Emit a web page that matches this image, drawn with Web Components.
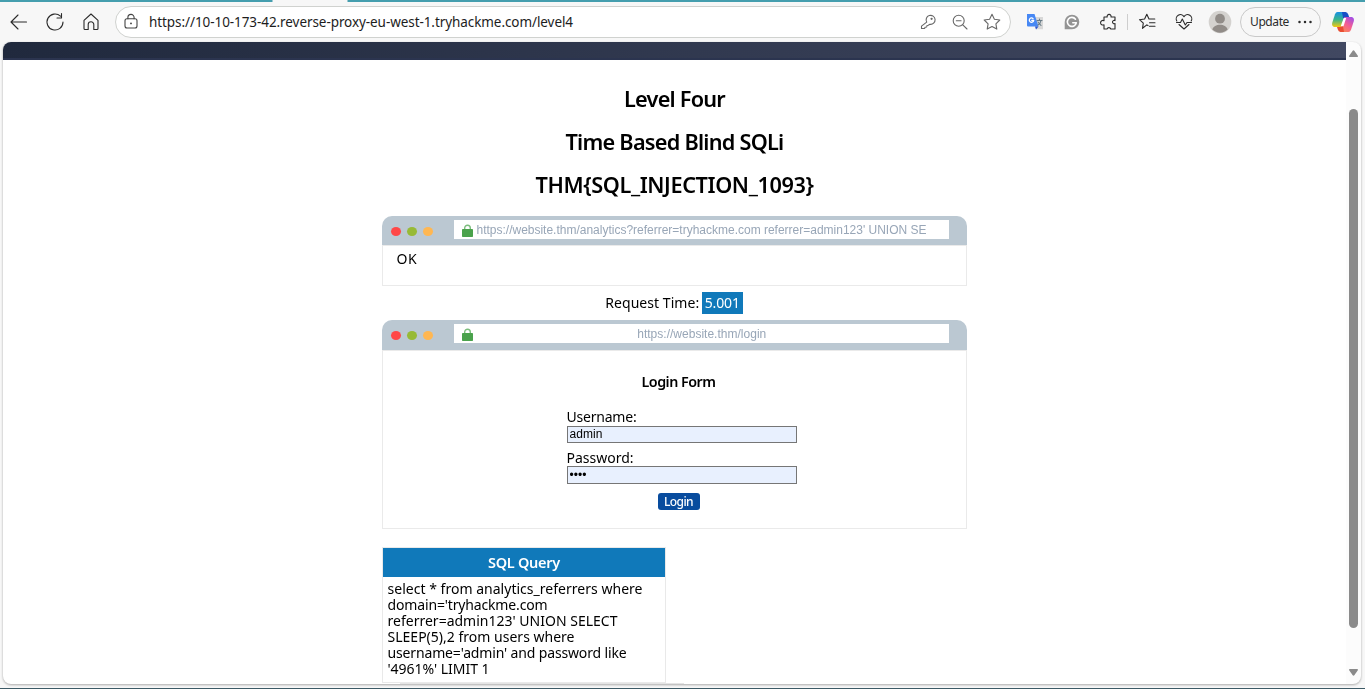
<!DOCTYPE html>
<html lang="en">
<head>
<meta charset="utf-8">
<title>Level Four</title>
<style>
html,body{margin:0;height:100%;overflow:hidden}
body{font-family:"Noto Sans","Open Sans",sans-serif;color:#000}
</style>
</head>
<body>
<browser-window></browser-window>
<script>
const define = (name, html, setup) => {
  const t = document.createElement('template');
  t.innerHTML = html;
  customElements.define(name, class extends HTMLElement {
    connectedCallback() {
      if (this.shadowRoot) return;
      this.attachShadow({mode: 'open'}).append(t.content.cloneNode(true));
      if (setup) setup(this, this.shadowRoot);
    }
  });
};

/* One line of text whose tracking is adjusted to occupy the requested width. */
define('fit-text', `<style>:host{display:inline-block;white-space:pre}span{display:inline-block}</style><span><slot></slot></span>`, (el, root) => {
  const s = root.querySelector('span'), w = +el.getAttribute('w');
  const natural = s.getBoundingClientRect().width;
  s.style.letterSpacing = ((w - natural) / el.textContent.length) + 'px';
  el.style.width = w + 'px';
});

const icons = {
  back: '<path d="M19.500 12H4M11 5l-7 7 7 7"/>',
  reload: '<path d="M17.500 6.200A8 8 0 1 0 20 12M18.500 3.500v4.500H14"/>',
  home: '<path d="M5 10.300 12 4l7 6.300v8.200a1 1 0 0 1-1 1h-3.200v-5a2.800 2.800 0 0 0-5.600 0v5H6a1 1 0 0 1-1-1z"/>',
  lock: '<rect x="6" y="8.800" width="12" height="9.200" rx="2"/><path d="M8.900 8.800V7.500a3.100 3.100 0 0 1 6.200 0v1.300"/><circle cx="12" cy="13.400" r=".4" fill="currentColor"/>',
  key: '<path d="M11.200 12.800a4.500 4.500 0 1 1 3.200 2.200L12.800 16l-1.300.2-.3 1.500-1.700.2-.3 1.300H6v-2.400z" transform="translate(-.5 -.7)"/><circle cx="15.600" cy="8.800" r=".6"/>',
  zoom: '<circle cx="10.700" cy="10.700" r="5.500"/><path d="M14.800 14.800l4.200 4.200M8.300 10.700h4.800"/>',
  star: '<path d="M12 4.300l2.400 4.900 5.400.8-3.900 3.800.9 5.300-4.800-2.500-4.800 2.500.9-5.300-3.900-3.800 5.400-.8z"/>',
  puzzle: '<path d="M8 7h3.200a2 2 0 1 1 3.800 0H19v3.600a1.700 1.700 0 1 0 0 3V19h-4.200a2 2 0 0 0-3.800 0H8v-4.300a2.300 2.300 0 1 1 0-4z"/>',
  favorites: '<path d="M12 15.600l-1.200-.7-4.300 3.400.8-5.100-3.800-3.500 5.100-.7 2.200-4.700L13 9h5.800M13.500 12.700H19M13.500 16.300H19"/>',
  health: '<path d="M4.800 11a4 4 0 0 1 7.200-4.300A4 4 0 0 1 19.200 11M7 14.500l5 4.500 5-4.500M4.500 12.500h4l1.800-3.500 3 6 1.700-2.500h4.500"/>',
  profile: '<g stroke="none"><circle cx="12" cy="12" r="11.300" fill="#d4d2cf"/><circle cx="12" cy="8.700" r="4.900" fill="#918c88"/><path d="M4.300 19.500c1.500-6.500 13.900-6.500 15.400 0a11 11 0 0 1-15.400 0z" fill="#918c88"/></g>',
  translate: '<g stroke="none"><path d="M11 7h9v12.300h-7z" fill="#d8d8d8"/><path d="M4 4h7.500l4 12.500H5a1 1 0 0 1-1-1z" fill="#4788f4"/><path d="M12 16.500h3.500L13 19.500z" fill="#2953cf"/></g><path d="M10 8.500a2.200 2.200 0 1 0 .7 2H8.800" stroke="#fff" stroke-width="1.300"/><path d="M14 10.500h5M16.500 9v1.500M18 10.500c-.5 2.500-2 4-3 4.500M15 12l3 3.500" stroke="#687c87"/>',
  grammar: '<path d="M12 4.700a7.300 7.300 0 0 1 0 14.600H4.700V12A7.300 7.300 0 0 1 12 4.700z" fill="#949494" stroke="none"/><path d="M15.500 9.200a4.500 4.500 0 1 0 .8 3.600h-3.500" stroke="#fff" stroke-width="1.600"/>',
  dots: '<g fill="currentColor" stroke="none"><circle cx="6.500" cy="12" r="1.250"/><circle cx="12" cy="12" r="1.250"/><circle cx="17.500" cy="12" r="1.250"/></g>',
  copilot: `<defs><linearGradient id="a" x2="0" y2="1"><stop stop-color="#168fe5"/><stop offset=".5" stop-color="#39b58c"/><stop offset="1" stop-color="#f5c90f"/></linearGradient><linearGradient id="b" x1=".8" x2=".2" y2="1"><stop stop-color="#a34ee5"/><stop offset=".5" stop-color="#f45d93"/><stop offset="1" stop-color="#fa8755"/></linearGradient></defs><g stroke="none"><path d="M6.500 2h8L10.500 17H4C1 17 .7 14.500 1.300 12.500L4 4.300Q4.800 2 6.500 2z" fill="url(#a)"/><path d="M11 2h3.500q2 0 2.800 2.500l.9 2.800h-3.200q-2 0-2.700 2.200z" fill="#174fc5"/><path d="M17.500 22h-8l4-15H20c3 0 3.300 2.500 2.700 4.500L20 19.700Q19.200 22 17.500 22z" fill="url(#b)"/><path d="M13 22H9.500q-2 0-2.700-2.400L6 17h3q2 0 2.700-2.400z" fill="#e84c31"/><path d="M12.700 8h2.500l-2.700 8.200H9.700z" fill="#fff"/></g>`
};
define('ui-icon', `<style>:host{display:block;flex:none;width:24px;height:24px}svg{display:block;width:100%;height:100%;fill:none;stroke:currentColor;stroke-width:1.100;stroke-linejoin:round;stroke-linecap:round}</style><svg viewBox="0 0 24 24"></svg>`,
  (el, root) => { root.querySelector('svg').innerHTML = icons[el.getAttribute('name')]; });

define('browser-toolbar', `<style>
:host{display:block;height:42px;box-sizing:border-box;padding:2px 0 0 7px;color:#2b2b2b;background:linear-gradient(90deg,#459eae 272px,#f7f7f7 273px,#f7f7f7 347px,#459eae 348px) 0 0/100% 2px no-repeat #f7f7f7}
.row{display:flex;height:40px;align-items:center}
.address{display:flex;align-items:center;box-sizing:border-box;width:896px;height:32px;border:1px solid #d0d2cf;border-radius:16px;background:#fff;margin-left:12px;padding:0 6px 0 3px;font:13.500px/20px "Noto Sans",sans-serif;color:#1d1d1d}
.address>ui-icon{color:#444}
.address fit-text{margin-left:6px}.tools{display:flex;gap:8px;margin-left:auto;color:#686868}
.ext{display:flex;gap:12.500px;margin-left:12px}
i{width:1px;height:16px;background:#cecece;margin:0 8px 0 7px}
.update{box-sizing:border-box;display:flex;align-items:center;width:81px;height:30px;border:1px solid #c9c9c9;border-radius:15px;margin-left:8px;padding-left:9px;font:12px/20px "Noto Sans",sans-serif}
.update ui-icon{margin-left:4px}
</style><div class="row">
<ui-icon name="back"></ui-icon><ui-icon name="reload" style="margin-left:12px"></ui-icon><ui-icon name="home" style="margin-left:12px"></ui-icon>
<div class="address"><ui-icon name="lock"></ui-icon><fit-text w="424">https://10-10-173-42.reverse-proxy-eu-west-1.tryhackme.com/level4</fit-text>
<div class="tools"><ui-icon name="key"></ui-icon><ui-icon name="zoom"></ui-icon><ui-icon name="star"></ui-icon></div></div>
<div class="ext"><ui-icon name="translate"></ui-icon><ui-icon name="grammar"></ui-icon><ui-icon name="puzzle"></ui-icon></div><i></i>
<ui-icon name="favorites"></ui-icon><ui-icon name="health" style="margin-left:12px"></ui-icon><ui-icon name="profile" style="margin-left:12px"></ui-icon>
<div class="update"><fit-text w="39">Update</fit-text><ui-icon name="dots"></ui-icon></div><ui-icon name="copilot" style="margin-left:10px"></ui-icon></div>`);

define('page-scrollbar', `<style>:host{display:flex;flex-direction:column;align-items:center;box-sizing:border-box;width:15px;flex:none;background:#fcfcfc;padding:8px 0 8px}
svg{display:block;width:9px;height:7px;fill:#8b8b8b}div{width:9px;height:519px;border-radius:5px;background:#8b8b8b;margin:52px 0 auto}</style>
<svg viewBox="0 0 9 7"><path d="M3.500 1q1-1.500 2 0L9 6q.2 1-.8 1H.8Q-.2 7 0 6z"/></svg><div></div><svg viewBox="0 0 9 7"><path d="M3.500 6q1 1.500 2 0L9 1q.2-1-.8-1H.8Q-.2 0 0 1z"/></svg>`);

define('mock-browser', `<style>
:host{display:block;width:585px}
.bar{box-sizing:border-box;height:var(--bar,29px);display:flex;align-items:flex-start;background:#bbc8d2;border-radius:10px 10px 0 0;padding:4px 18px 0 9px}
.dots{display:flex;gap:6px;padding-top:7px;width:63px}b{width:10px;height:9px;border-radius:50%}
.url{box-sizing:border-box;width:495px;height:19px;background:#fff;color:#98a6b7;display:flex;align-items:center;padding-left:8px;font:12px/18px "Liberation Sans",Arial,sans-serif}
svg{width:11px;height:13px;margin-right:3.500px;flex:none;padding-top:1px}
.text{flex:1;text-align:var(--align,left)}
.body{box-sizing:border-box;height:var(--body,41px);border:1px solid #eaeaea}
</style><div class="bar"><div class="dots"><b style="background:#ff4747"></b><b style="background:#97ba36"></b><b style="background:#ffb752"></b></div>
<div class="url"><svg viewBox="0 0 11 13"><path d="M2.700 6V4a2.800 2.800 0 0 1 5.600 0v2" fill="none" stroke="#7cbd7d" stroke-width="1.400"/><rect y="5" width="11" height="8" rx=".7" fill="#4aa24c"/></svg><div class="text"><slot name="url"></slot></div></div></div>
<div class="body"><slot></slot></div>`);

define('login-field', `<style>:host{display:block;width:230px;font-size:14px}
label{display:block;height:17px;line-height:var(--lh,15px)}
div{box-sizing:border-box;height:var(--h,17px);border:1px solid #767676;background:#e8f0fe;padding-left:2px;font:12px/14px "Liberation Sans",Arial,sans-serif;display:flex;align-items:flex-start}</style>
<label><slot name="label"></slot></label><div><slot></slot></div>`);

define('login-form', `<style>:host{display:flex;flex-direction:column;align-items:center;padding-left:8px}
h3{margin:22px 0 18px;font-size:14.300px;line-height:18px;font-weight:600}
login-field{margin-left:6px}login-field+login-field{margin-top:6px;--h:18px;--lh:17px}
.pw{letter-spacing:0;font-size:12px;line-height:16px}
button{margin:9px 0 0;width:42px;height:17px;border:0;border-radius:3px;background:#084c9e;color:#fff;padding:0;font:500 12px/17px "Noto Sans",sans-serif;display:block}</style>
<h3><fit-text w="74">Login Form</fit-text></h3>
<login-field><fit-text slot="label" w="70">Username:</fit-text><fit-text w="33">admin</fit-text></login-field>
<login-field><fit-text slot="label" w="67">Password:</fit-text><fit-text w="17" class="pw">••••</fit-text></login-field>
<button><fit-text w="29">Login</fit-text></button>`);

define('query-panel', `<style>:host{display:block;box-sizing:border-box;width:284px;height:136px;border:1px solid #e9e9e9;font-size:14px;line-height:16px}
header{height:29px;background:#1079ba;color:#fff;text-align:center;font-weight:600;line-height:29px;font-size:14.500px}
.sql{display:flex;flex-direction:column;align-items:flex-start;padding:4px 0 0 4.500px}</style>
<header><fit-text w="72">SQL Query</fit-text></header><div class="sql">
<fit-text w="255">select * from analytics_referrers where</fit-text>
<fit-text w="160">domain='tryhackme.com</fit-text>
<fit-text w="230">referrer=admin123' UNION SELECT</fit-text>
<fit-text w="187">SLEEP(5),2 from users where</fit-text>
<fit-text w="239">username='admin' and password like</fit-text>
<fit-text w="102">'4961%' LIMIT 1</fit-text></div>`);

define('level-page', `<style>
:host{display:block;flex:1;background:#fff;overflow:hidden}
.banner{box-sizing:border-box;height:18px;background:linear-gradient(100deg,#20293d,#414861);border-bottom:2px solid #2b344f}
main{width:585px;margin:0 auto;display:flex;flex-direction:column}
h2{text-align:center;margin:0;height:43px;line-height:43px;font-size:21.700px;font-weight:600}
.heads{padding-top:17px;height:139px}
.time{height:34px;display:flex;align-items:center;justify-content:center;font-size:14px;line-height:22px}
.time b{font-weight:400;background:#1079ba;color:#fff;padding:0 3px;margin:0 1px 0 2.500px;height:22px}
.ok{font-size:14px;line-height:20px;padding:3px 0 0 13.500px}
.login{--bar:30px;--body:179px;--align:center}
query-panel{margin-top:18px}
.edge{height:1px;width:284px;margin-left:18px;background:#e4e4e4}
</style><div class="banner"></div><main>
<div class="heads"><h2><fit-text w="101">Level Four</fit-text></h2><h2><fit-text w="218">Time Based Blind SQLi</fit-text></h2><h2><fit-text w="278">THM{SQL_INJECTION_1093}</fit-text></h2></div>
<mock-browser><fit-text slot="url" w="450">https://website.thm/analytics?referrer=tryhackme.com referrer=admin123' UNION SE</fit-text><div class="ok"><fit-text w="20.5">OK</fit-text></div></mock-browser>
<div class="time"><fit-text w="94">Request Time:</fit-text><b><fit-text w="35">5.001</fit-text></b></div>
<mock-browser class="login"><fit-text slot="url" w="129" style="margin-right:22px">https://website.thm/login</fit-text><login-form></login-form></mock-browser>
<query-panel></query-panel><div class="edge"></div></main>`);

define('browser-window', `<style>:host{display:flex;flex-direction:column;box-sizing:border-box;width:1365px;height:689px;background:#f7f7f7;border-bottom:1px solid #3d5a66}
.view{display:flex;height:642px;margin:0 4px 0 3px;border-radius:8px;overflow:hidden;}
.shadow{border-radius:8px;filter:drop-shadow(0 1px 1px #aaa)}</style>
<browser-toolbar></browser-toolbar><div class="shadow"><div class="view"><level-page></level-page><page-scrollbar></page-scrollbar></div></div>`);
</script>
</body>
</html>
